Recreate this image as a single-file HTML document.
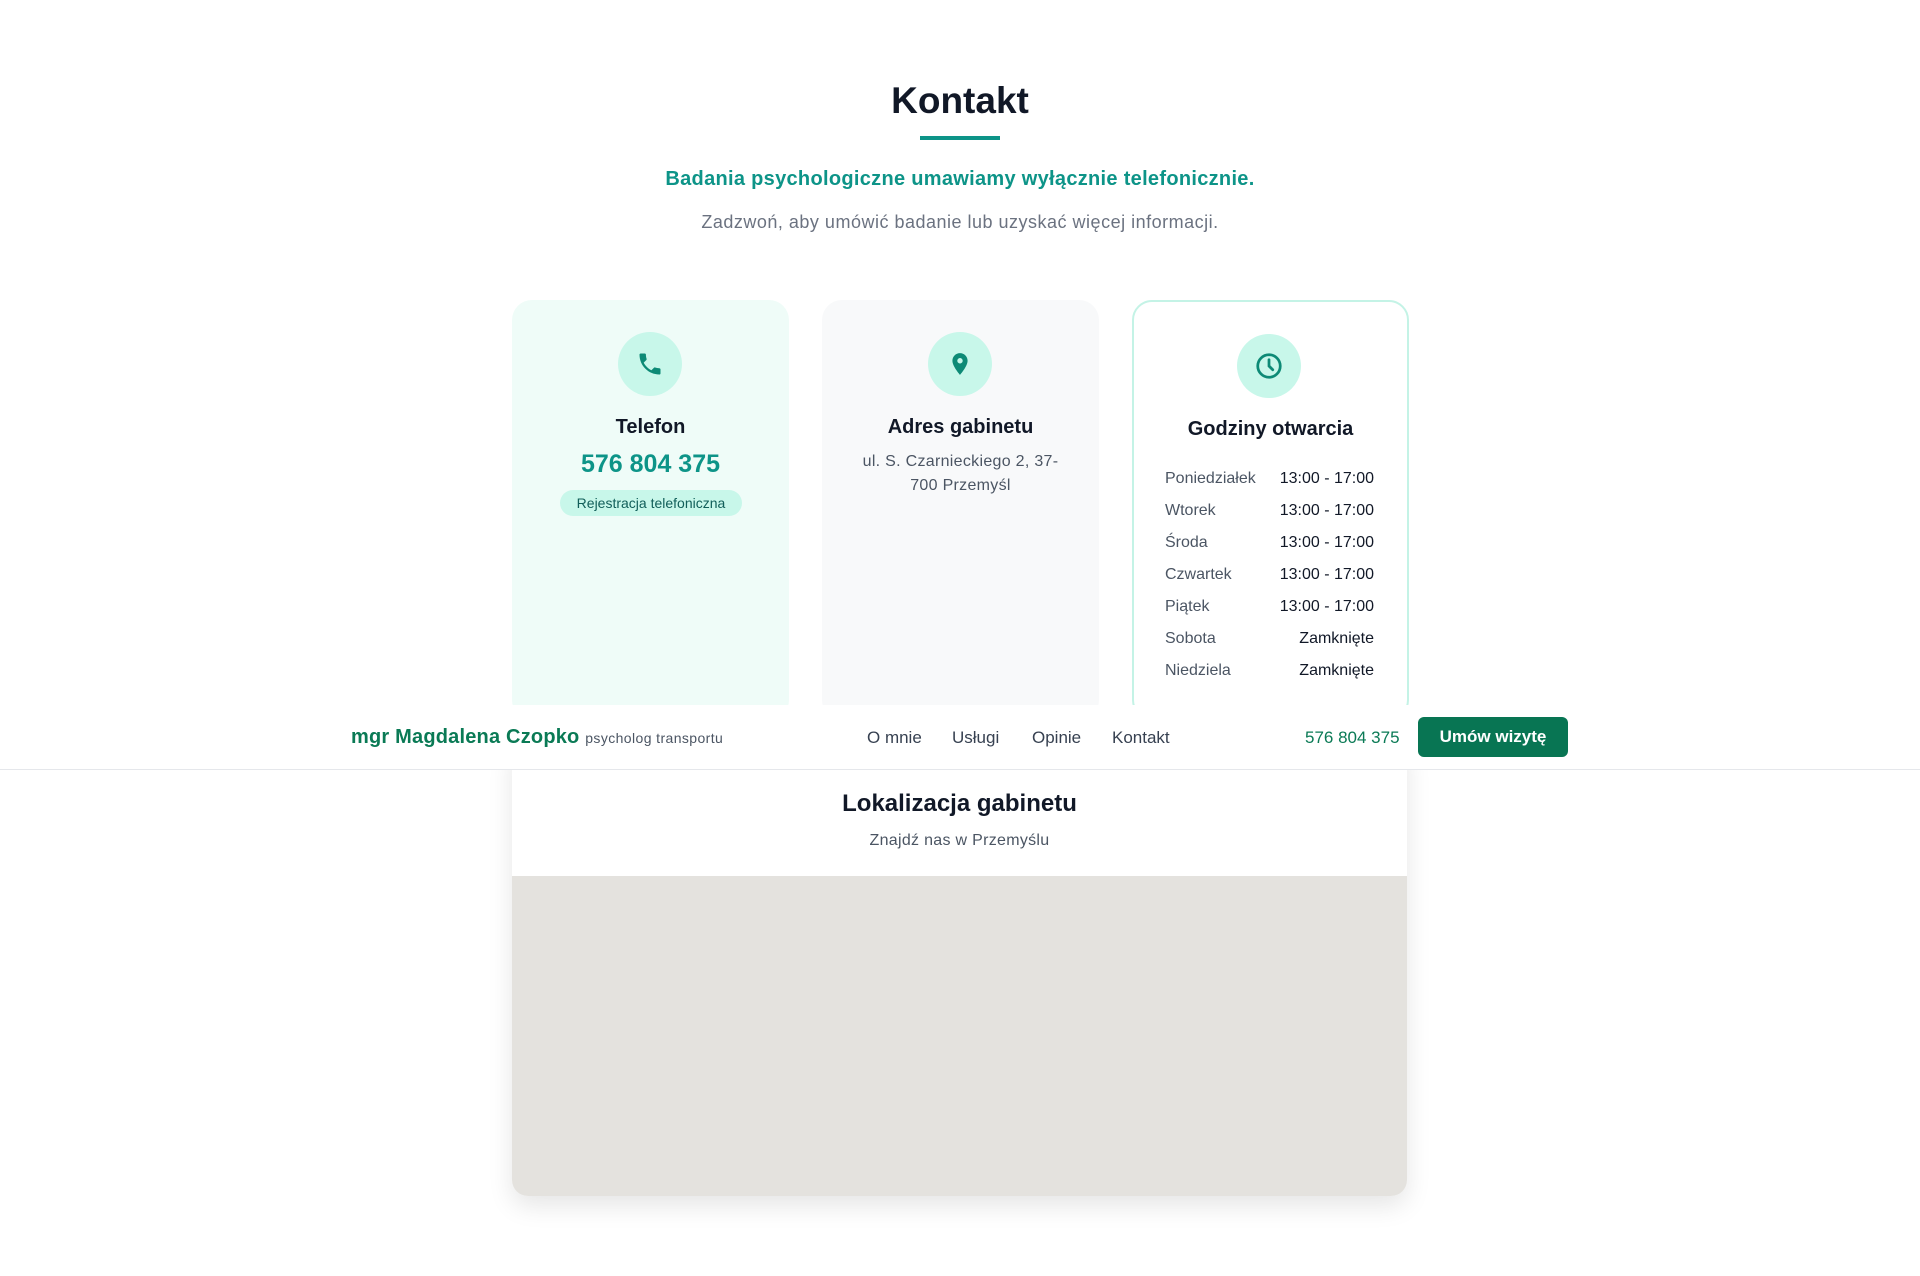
<!DOCTYPE html>
<html><head><meta charset="utf-8"><style>
*{margin:0;padding:0;box-sizing:border-box}
body{width:1920px;height:1276px;background:#fff;font-family:"Liberation Sans",sans-serif;position:relative;overflow:hidden;color:#111827}
.abs{position:absolute}
.c{text-align:center}
.card{position:absolute;top:300px;width:277px;height:420px;border-radius:20px}
.ic{position:absolute;width:64px;height:64px;border-radius:50%;background:#c8f7ea;display:flex;align-items:center;justify-content:center}
.row{position:absolute;left:1165px;width:209px;font-size:16px;display:flex;justify-content:space-between}
.row span:first-child{color:#4b5563}
.row span:last-child{color:#111827}
</style></head><body>
<div class="abs c" style="left:0;width:1920px;top:80px;font-size:37px;font-weight:bold;color:#111827">Kontakt</div>
<div class="abs" style="left:920px;top:136px;width:80px;height:4px;background:#0d9488"></div>
<div class="abs c" style="left:0;width:1920px;top:168px;font-size:20px;font-weight:bold;color:#0d9488;letter-spacing:0.3px">Badania psychologiczne umawiamy wyłącznie telefonicznie.</div>
<div class="abs c" style="left:0;width:1920px;top:212px;font-size:18px;color:#6b7280;letter-spacing:0.5px">Zadzwoń, aby umówić badanie lub uzyskać więcej informacji.</div>

<div class="card" style="left:512px;background:#effcf8"></div>
<div class="card" style="left:822px;background:#f8f9fa"></div>
<div class="card" style="left:1132px;background:#fff;border:2px solid #c4f3e6"></div>

<div class="ic" style="left:618px;top:332px"><svg width="28" height="28" viewBox="0 0 24 24"><path fill="#0d8a76" d="M6.6 10.8c1.4 2.8 3.8 5.1 6.6 6.6l2.2-2.2c.3-.3.7-.4 1-.2 1.1.4 2.3.6 3.6.6.6 0 1 .4 1 1V20c0 .6-.4 1-1 1C10.6 21 3 13.4 3 4c0-.6.4-1 1-1h3.5c.6 0 1 .4 1 1 0 1.3.2 2.5.6 3.6.1.3 0 .7-.2 1z"/></svg></div>
<div class="ic" style="left:928px;top:332px"><svg width="26" height="26" viewBox="0 0 24 24"><path fill="#0d8a76" d="M12 2C8.1 2 5 5.1 5 9c0 5.2 7 13 7 13s7-7.8 7-13c0-3.9-3.1-7-7-7zm0 9.5a2.5 2.5 0 110-5 2.5 2.5 0 010 5z"/></svg></div>
<div class="ic" style="left:1237px;top:334px"><svg width="30" height="30" viewBox="0 0 24 24" fill="none" stroke="#0d8a76" stroke-width="2.2" stroke-linecap="round"><circle cx="12" cy="12" r="9"/><path d="M12 7v5l3 3"/></svg></div>

<div class="abs c" style="left:512px;width:277px;top:416px;font-size:20px;font-weight:bold">Telefon</div>
<div class="abs c" style="left:512px;width:277px;top:450px;font-size:25px;font-weight:bold;color:#0d9488">576 804 375</div>
<div class="abs c" style="left:560px;width:182px;top:490px;height:26px;line-height:26px;border-radius:13px;background:#c8f7ea;font-size:14px;color:#115e59">Rejestracja telefoniczna</div>

<div class="abs c" style="left:822px;width:277px;top:416px;font-size:20px;font-weight:bold">Adres gabinetu</div>
<div class="abs c" style="left:822px;width:277px;top:450px;font-size:16px;line-height:24px;color:#4b5563;letter-spacing:0.3px">ul. S. Czarnieckiego 2, 37-<br>700 Przemyśl</div>

<div class="abs c" style="left:1132px;width:277px;top:418px;font-size:20px;font-weight:bold">Godziny otwarcia</div>
<div class="row" style="top:470px"><span>Poniedziałek</span><span>13:00 - 17:00</span></div>
<div class="row" style="top:502px"><span>Wtorek</span><span>13:00 - 17:00</span></div>
<div class="row" style="top:534px"><span>Środa</span><span>13:00 - 17:00</span></div>
<div class="row" style="top:566px"><span>Czwartek</span><span>13:00 - 17:00</span></div>
<div class="row" style="top:598px"><span>Piątek</span><span>13:00 - 17:00</span></div>
<div class="row" style="top:630px"><span>Sobota</span><span>Zamknięte</span></div>
<div class="row" style="top:662px"><span>Niedziela</span><span>Zamknięte</span></div>

<div class="abs" style="left:512px;top:740px;width:895px;height:456px;border-radius:16px;background:#fff;box-shadow:0 10px 25px rgba(0,0,0,0.1);overflow:hidden">
  <div class="abs c" style="left:0;width:895px;top:50px;font-size:24px;font-weight:bold">Lokalizacja gabinetu</div>
  <div class="abs c" style="left:0;width:895px;top:92px;font-size:16px;color:#4b5563;letter-spacing:0.3px">Znajdź nas w Przemyślu</div>
  <div class="abs" style="left:0;top:136px;width:895px;height:320px;background:#e4e2de"></div>
</div>

<div class="abs" style="left:0;top:705px;width:1920px;height:65px;background:#fff;border-bottom:1px solid #e5e7eb"></div>
<div class="abs" style="left:351px;top:726px;font-size:20px;font-weight:bold;color:#0a7a55;letter-spacing:0.2px">mgr Magdalena Czopko <span style="font-size:14px;font-weight:normal;color:#4b5563;letter-spacing:0.4px">psycholog transportu</span></div>
<div class="abs" style="left:867px;top:728px;font-size:17px;color:#374151">O mnie</div>
<div class="abs" style="left:952px;top:728px;font-size:17px;color:#374151">Usługi</div>
<div class="abs" style="left:1032px;top:728px;font-size:17px;color:#374151">Opinie</div>
<div class="abs" style="left:1112px;top:728px;font-size:17px;color:#374151">Kontakt</div>
<div class="abs" style="left:1305px;top:728px;font-size:17px;color:#0a7a55">576 804 375</div>
<div class="abs c" style="left:1418px;top:717px;width:150px;height:40px;line-height:40px;border-radius:6px;background:#087553;color:#fff;font-size:17px;font-weight:bold">Umów wizytę</div>
</body></html>
